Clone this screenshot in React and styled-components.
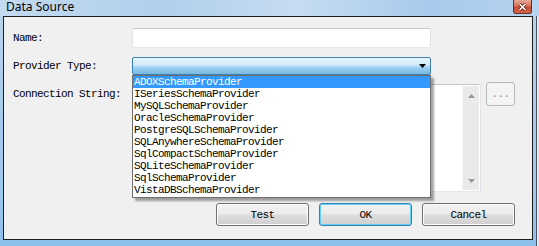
import React from 'react'
import styled, { createGlobalStyle } from 'styled-components'

const GlobalStyle = createGlobalStyle`
  html, body {
    margin: 0;
    padding: 0;
    background: #ffffff;
  }
  * {
    box-sizing: border-box;
  }
`

const providers = [
  'ADOXSchemaProvider',
  'ISeriesSchemaProvider',
  'MySQLSchemaProvider',
  'OracleSchemaProvider',
  'PostgreSQLSchemaProvider',
  'SQLAnywhereSchemaProvider',
  'SqlCompactSchemaProvider',
  'SQLiteSchemaProvider',
  'SqlSchemaProvider',
  'VistaDBSchemaProvider',
]

const mono = `
  font-family: "Liberation Mono", "DejaVu Sans Mono", monospace;
  font-size: 11px;
  letter-spacing: -0.6px;
  color: #000;
`

const Window = styled.div`
  width: 539px;
  height: 246px;
  display: flex;
  flex-direction: column;
  background: linear-gradient(180deg, #bcd5ee 0%, #a9cbec 40%, #9cc6ee 80%, #8dbfec 100%);
  box-shadow: inset -2px 0 0 #e4ecf4, inset -3px 0 0 #46525e;
`

const TitleBar = styled.div`
  height: 16px;
  display: flex;
  justify-content: space-between;
  align-items: flex-start;
  padding: 0 7px 0 6px;
  background: linear-gradient(90deg, #c3daf0 0%, #b1cfec 30%, #c6dcf1 55%, #a8caec 80%, #b6d3ef 100%);
`

const Title = styled.div`
  font-family: "Noto Sans", "Open Sans", sans-serif;
  font-size: 12px;
  line-height: 14px;
  color: #000;
`

const CloseButton = styled.div`
  width: 19px;
  height: 14px;
  display: flex;
  align-items: center;
  justify-content: center;
  border: 1px solid #6f2a1e;
  border-top: none;
  border-radius: 0 0 3px 3px;
  background: linear-gradient(180deg, #e9a795 0%, #d9745e 45%, #c64a31 55%, #d2674a 100%);
`

const Client = styled.div`
  flex: 1;
  margin: 0 6px 6px 3px;
  border: 1px solid #1f1f1f;
  background: #f0f0f0;
  display: flex;
  flex-direction: column;
  padding: 0 17px 0 9px;
`

const Row = styled.div`
  display: flex;
  align-items: ${(p) => (p.$top ? 'flex-start' : 'center')};
  margin-top: ${(p) => p.$gap}px;
`

const Label = styled.div`
  ${mono}
  width: 119px;
  flex: none;
  line-height: 12px;
  margin-top: ${(p) => p.$offset || 0}px;
`

const TextBox = styled.div`
  width: 299px;
  height: 20px;
  background: #fff;
  border: 1px solid;
  border-color: #c4c6cb #dfe3e8 #e5e9ee #dfe2e9;
  border-radius: 2px;
`

const ComboWrap = styled.div`
  position: relative;
  width: 299px;
  height: 18px;
`

const Combo = styled.div`
  height: 18px;
  border: 1px solid #3c7fb1;
  border-radius: 2px;
  background: linear-gradient(180deg, #e8f5fd 0%, #cfeafb 45%, #a3d4f3 55%, #77b8e2 100%);
  display: flex;
  justify-content: flex-end;
  align-items: center;
  padding-right: 4px;
`

const DropList = styled.div`
  position: absolute;
  top: 18px;
  left: 0;
  width: 299px;
  background: #fff;
  border: 1px solid #6e6e6e;
  padding-bottom: 1px;
  box-shadow: 3px 3px 2px rgba(0, 0, 0, 0.35);
  z-index: 2;
`

const DropItem = styled.div`
  ${mono}
  height: 12px;
  line-height: 12px;
  padding-left: 1px;
  white-space: nowrap;
  background: ${(p) => (p.$active ? '#3399ff' : 'transparent')};
  color: ${(p) => (p.$active ? '#fff' : '#000')};
`

const MemoBox = styled.div`
  width: 350px;
  height: 108px;
  margin-top: 2px;
  background: #fff;
  border: 1px solid;
  border-color: #c4c6cb #dfe3e8 #e5e9ee #dfe2e9;
  border-radius: 2px;
  display: flex;
  justify-content: flex-end;
  padding: 1px;
`

const ScrollBar = styled.div`
  width: 17px;
  background: #eaeaea;
  border-left: 1px solid #f6f6f6;
  display: flex;
  flex-direction: column;
  justify-content: space-between;
  align-items: center;
  padding: 8px 0 7px;
`

const BrowseButton = styled.div`
  ${mono}
  width: 29px;
  height: 24px;
  margin-left: 5px;
  display: flex;
  align-items: center;
  justify-content: center;
  background: #f4f4f4;
  border: 1px solid #b5b9bc;
  border-radius: 3px;
  color: #8d8d8d;
`

const ButtonBar = styled.div`
  display: flex;
  justify-content: flex-end;
  gap: 10px;
  margin-top: 11px;
`

const Button = styled.div`
  ${mono}
  width: 93px;
  height: 23px;
  display: flex;
  align-items: center;
  justify-content: center;
  border: 1px solid ${(p) => (p.$default ? '#3c7fb1' : '#707070')};
  border-radius: 3px;
  background: linear-gradient(180deg, #f2f2f2 0%, #ebebeb 48%, #dddddd 52%, #cfcfcf 100%);
  box-shadow: ${(p) => (p.$default ? 'inset 0 0 0 1px #5fd0f7' : 'inset 0 0 0 1px #fcfcfc')};
`

function Triangle({ down, color = '#000', w = 7, h = 4 }) {
  const pts = down ? `0,0 ${w},0 ${w / 2},${h}` : `0,${h} ${w},${h} ${w / 2},0`
  return (
    <svg width={w} height={h} viewBox={`0 0 ${w} ${h}`}>
      <polygon points={pts} fill={color} />
    </svg>
  )
}

export default function App() {
  return (
    <>
      <GlobalStyle />
      <Window>
        <TitleBar>
          <Title>Data Source</Title>
          <CloseButton>
            <svg width="9" height="8" viewBox="0 0 9 8">
              <path d="M1.5 1 L7.5 7 M7.5 1 L1.5 7" stroke="#5a1a10" strokeWidth="3" />
              <path d="M1.5 1 L7.5 7 M7.5 1 L1.5 7" stroke="#fff" strokeWidth="1.6" />
            </svg>
          </CloseButton>
        </TitleBar>
        <Client>
          <Row $gap={11}>
            <Label>Name:</Label>
            <TextBox />
          </Row>
          <Row $gap={9}>
            <Label>Provider Type:</Label>
            <ComboWrap>
              <Combo>
                <Triangle down />
              </Combo>
              <DropList>
                {providers.map((name, i) => (
                  <DropItem key={name} $active={i === 0}>
                    {name}
                  </DropItem>
                ))}
              </DropList>
            </ComboWrap>
          </Row>
          <Row $gap={7} $top>
            <Label $offset={6}>Connection String:</Label>
            <MemoBox>
              <ScrollBar>
                <Triangle color="#9a9a9a" w={7} h={4} />
                <Triangle down color="#9a9a9a" w={7} h={4} />
              </ScrollBar>
            </MemoBox>
            <BrowseButton>...</BrowseButton>
          </Row>
          <ButtonBar>
            <Button>Test</Button>
            <Button $default>OK</Button>
            <Button>Cancel</Button>
          </ButtonBar>
        </Client>
      </Window>
    </>
  )
}
